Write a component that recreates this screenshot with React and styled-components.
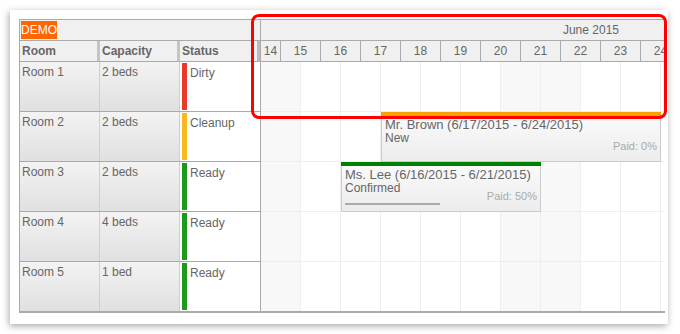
import React from 'react';
import styled, { createGlobalStyle } from 'styled-components';

const GlobalStyle = createGlobalStyle`
  body {
    margin: 0;
    background: #fff;
    font-family: "Liberation Sans", Arial, sans-serif;
    font-size: 12px;
    color: #666;
  }
  * { box-sizing: border-box; }
`

const Page = styled.div`
  position: relative;
  padding: 10px;
  width: 680px;
  height: 334px;
`

const Card = styled.div`
  width: 658px;
  height: 314px;
  background: #fff;
  padding: 9px 0 0 9px;
  box-shadow: -1px 2px 7px rgba(0, 0, 0, 0.35);
  overflow: hidden;
`

const Scheduler = styled.div`
  display: flex;
  width: 646px;
  border-top: 1px solid #aaa;
  border-left: 1px solid #aaa;
  border-bottom: 2px solid #aaa;
  overflow: hidden;
`

const LeftPanel = styled.div`
  width: 241px;
  flex-shrink: 0;
  border-right: 1px solid #aaa;
`

const HeaderRow = styled.div`
  display: flex;
  align-items: center;
  height: 21px;
  background: #f0f0f0;
  border-bottom: 1px solid #aaa;
  justify-content: ${p => (p.end ? 'flex-end' : 'flex-start')};
  padding-right: ${p => (p.end ? '46px' : '0')};
`

const Demo = styled.span`
  margin-left: 1px;
  height: 18px;
  line-height: 18px;
  background: #ff6600;
  color: #fff;
  font-size: 12px;
`

const ColHead = styled.div`
  width: 80px;
  height: 100%;
  padding: 3px 0 0 2px;
  font-weight: bold;
  color: #666;
  border-right: ${p => (p.last ? '3px solid #bbb' : '3px solid #c4c4c4')};
  margin-right: ${p => (p.last ? '-3px' : '0')};
`

const Row = styled.div`
  display: flex;
  height: 50px;
  border-bottom: 1px solid #aaa;
  &:last-child {
    height: 49px;
    border-bottom: none;
  }
`

const RowCell = styled.div`
  width: 80px;
  padding: 3px 0 0 2px;
  color: #666;
  background: linear-gradient(#f3f3f3, #e0e0e0);
  border-right: 1px solid #cfcfcf;
`

const StatusCell = styled.div`
  display: flex;
  width: 80px;
  background: #fff;
  padding: 1px 0 1px 2px;
`

const StatusBar = styled.div`
  width: 5px;
  background: ${p => p.color};
`

const StatusText = styled.div`
  padding: 3px 0 0 3px;
`

const Timeline = styled.div`
  flex: 1;
  overflow: hidden;
`

const DayRow = styled.div`
  display: flex;
  height: 21px;
  background: #f0f0f0;
  border-bottom: 1px solid #aaa;
`

const DayCell = styled.div`
  flex-shrink: 0;
  width: ${p => p.w}px;
  border-right: 1px solid #aaa;
  text-align: center;
  padding-top: 3px;
  color: #666;
`

const BodyRow = styled.div`
  position: relative;
  display: flex;
  height: 50px;
  border-bottom: 1px solid #eee;
  &:last-child {
    height: 49px;
    border-bottom: none;
  }
`

const GridCell = styled.div`
  flex-shrink: 0;
  width: 40px;
  border-right: 1px solid #eee;
  background: ${p => (p.shade ? '#f8f8f8' : '#fff')};
`

const Event = styled.div`
  position: absolute;
  top: 0;
  height: 50px;
  display: flex;
  flex-direction: column;
`

const EventBar = styled.div`
  flex-shrink: 0;
  height: 4px;
  background: ${p => p.color};
`

const EventBox = styled.div`
  position: relative;
  flex: 1;
  min-height: 0;
  border: 1px solid #ccc;
  border-top: none;
  background: linear-gradient(#fafafa, #ececec);
  padding: 1px 3px 0 3px;
  color: #666;
`

const EventTitle = styled.div`
  font-size: 13px;
  line-height: 15px;
  white-space: nowrap;
`

const EventText = styled.div`
  font-size: 12px;
  line-height: 13px;
`

const Paid = styled.div`
  position: absolute;
  right: 3px;
  bottom: 8px;
  font-size: 11px;
  line-height: 13px;
  color: #aaa;
`

const Progress = styled.div`
  position: absolute;
  left: 3px;
  bottom: 6px;
  height: 2px;
  background: #aaa;
`

const Highlight = styled.div`
  position: absolute;
  left: 251px;
  top: 14px;
  width: 416px;
  height: 105px;
  border: 3px solid #f00;
  border-radius: 8px;
  pointer-events: none;
`

const rooms = [
  { name: 'Room 1', cap: '2 beds', status: 'Dirty', color: '#e8392c' },
  { name: 'Room 2', cap: '2 beds', status: 'Cleanup', color: '#f8b91f' },
  { name: 'Room 3', cap: '2 beds', status: 'Ready', color: '#1d9a1d' },
  { name: 'Room 4', cap: '4 beds', status: 'Ready', color: '#1d9a1d' },
  { name: 'Room 5', cap: '1 bed', status: 'Ready', color: '#1d9a1d' },
]

const days = [14, 15, 16, 17, 18, 19, 20, 21, 22, 23, 24]
const shaded = [0, 6, 7]

const events = {
  1: { left: 120, width: 280, color: '#f9a000', title: 'Mr. Brown (6/17/2015 - 6/24/2015)', text: 'New', paid: 0 },
  2: { left: 80, width: 200, color: '#008000', title: 'Ms. Lee (6/16/2015 - 6/21/2015)', text: 'Confirmed', paid: 50 },
}

export default function App() {
  return (
    <Page>
      <GlobalStyle />
      <Card>
        <Scheduler>
          <LeftPanel>
            <HeaderRow><Demo>DEMO</Demo></HeaderRow>
            <HeaderRow>
              <ColHead>Room</ColHead>
              <ColHead>Capacity</ColHead>
              <ColHead last>Status</ColHead>
            </HeaderRow>
            {rooms.map(r => (
              <Row key={r.name}>
                <RowCell>{r.name}</RowCell>
                <RowCell>{r.cap}</RowCell>
                <StatusCell>
                  <StatusBar color={r.color} />
                  <StatusText>{r.status}</StatusText>
                </StatusCell>
              </Row>
            ))}
          </LeftPanel>
          <Timeline>
            <HeaderRow end>June 2015</HeaderRow>
            <DayRow>
              {days.map((d, i) => (
                <DayCell key={d} w={i === 0 ? 20 : 40}>{d}</DayCell>
              ))}
            </DayRow>
            {rooms.map((r, ri) => {
              const ev = events[ri]
              return (
                <BodyRow key={r.name}>
                  {days.map((d, i) => (
                    <GridCell key={d} shade={shaded.includes(i)} />
                  ))}
                  {ev && (
                    <Event style={{ left: ev.left, width: ev.width }}>
                      <EventBar color={ev.color} />
                      <EventBox>
                        <EventTitle>{ev.title}</EventTitle>
                        <EventText>{ev.text}</EventText>
                        <Paid>Paid: {ev.paid}%</Paid>
                        <Progress style={{ width: `calc((100% - 8px) * ${ev.paid / 100})` }} />
                      </EventBox>
                    </Event>
                  )}
                </BodyRow>
              )
            })}
          </Timeline>
        </Scheduler>
      </Card>
      <Highlight />
    </Page>
  )
}
